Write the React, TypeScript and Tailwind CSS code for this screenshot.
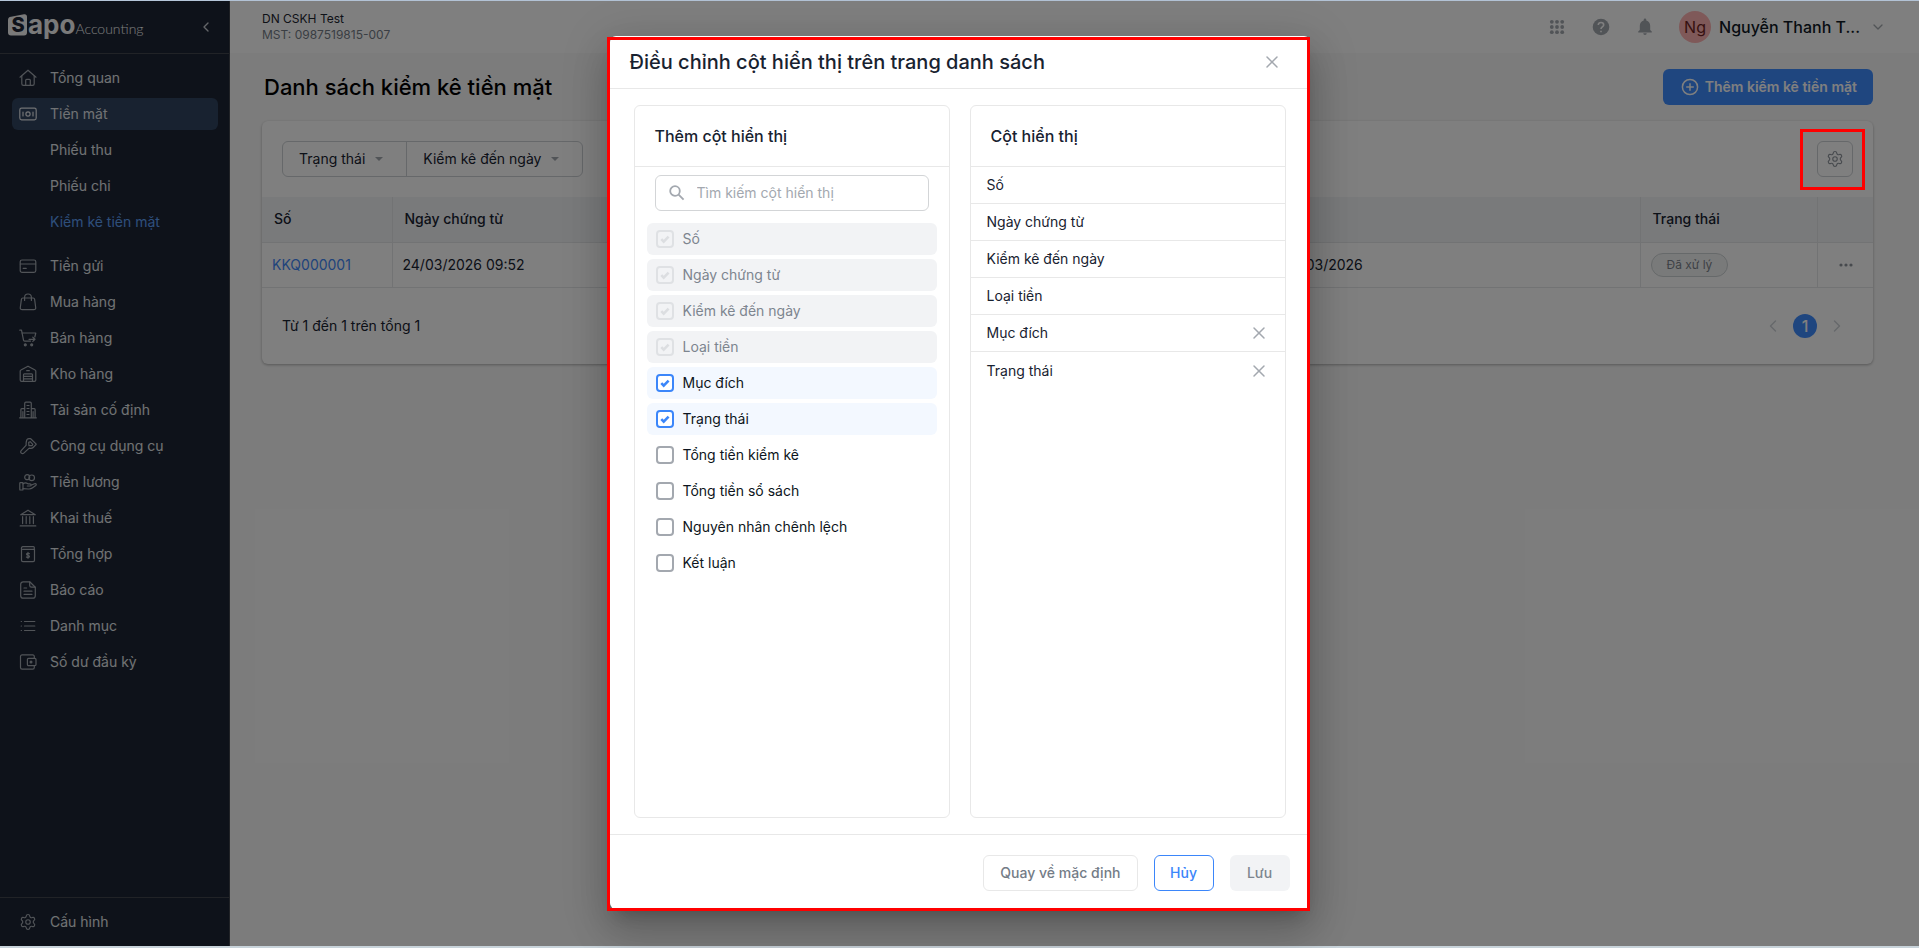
import { useState, type ReactNode } from "react";
import { ChevronDown, ChevronLeft, ChevronRight, Settings, X } from "lucide-react";

function NavIcon({ children }: { children: ReactNode }) {
  return (
    <svg
      viewBox="0 0 18 18"
      className="size-[18px] shrink-0"
      fill="none"
      stroke="currentColor"
      strokeWidth="1.2"
      strokeLinecap="round"
      strokeLinejoin="round"
      aria-hidden="true"
    >
      {children}
    </svg>
  );
}

const icons: Record<string, ReactNode> = {
  home: (
    <>
      <path d="M1 8.2 9 1.2l8 7" />
      <path d="M2.8 7v7.8c0 1 .6 1.6 1.6 1.6h9.2c1 0 1.6-.6 1.6-1.6V7" />
      <path d="M6.7 16.2v-5c0-.6.3-.9.9-.9h2.8c.6 0 .9.3.9.9v5" />
    </>
  ),
  cash: (
    <>
      <rect x="0.8" y="3.2" width="16.4" height="11.6" rx="1.8" />
      <circle cx="9" cy="9" r="2.1" />
      <path d="M4 7v4M14 7v4" />
    </>
  ),
  card: (
    <>
      <rect x="1.2" y="3" width="15.6" height="12.4" rx="1.8" />
      <path d="M1.4 7h15.2M4.2 11.4h3" />
    </>
  ),
  bag: (
    <>
      <path d="M3.9 5h10.2c.8 0 1.4.5 1.5 1.3l1.1 8.2c.2 1.3-.6 2.2-1.9 2.2H3.2c-1.3 0-2.1-.9-1.9-2.2l1.1-8.2C2.500 5.500 3.100 5 3.900 5Z" />
      <path d="M5.600 7.400V4.400a3.400 3.400 0 0 1 6.800 0v3" />
    </>
  ),
  cart: (
    <>
      <path d="M.8 1.200h1.700l2 10c.1.600.5.900 1.100.9h6" />
      <path d="M3.200 4h13.600l-1 4" />
      <path d="M10 10.300h5.600M13.800 8.200l2.200 2.100-2.200 2.100" />
      <circle cx="6.300" cy="15.800" r="1" fill="currentColor" />
      <circle cx="12.700" cy="15.800" r="1" fill="currentColor" />
    </>
  ),
  warehouse: (
    <>
      <path d="M1.200 15V6.100c0-.5.200-.9.700-1.100L9 1.200 16.100 5c.5.200.7.600.7 1.100V15c0 .9-.5 1.400-1.400 1.400H2.600c-.9 0-1.400-.5-1.400-1.400Z" />
      <path d="M4.500 16.200V9.800c0-.6.300-.9.900-.9h7.200c.6 0 .9.300.9.900v6.400M4.700 11.400h8.600M4.700 13.900h8.600M7.700 5.700h2.600" />
    </>
  ),
  building: (
    <>
      <path d="M.6 16.800h16.800M5.700 16.600V2.400c0-.8.400-1.200 1.200-1.200h4.200c.8 0 1.200.4 1.200 1.200v14.200M1.900 16.600V8.500c0-.6.300-.9.900-.9h2.700M12.500 7.600h2.700c.6 0 .9.300.9.900v8.100" />
      <path d="M8 4.500h2M8 7.500h2M8 10.500h2M8 13.500h2M3.900 10.500v6M14.100 10.500v6" />
    </>
  ),
  tool: (
    <>
      <path d="M7.400 4.500c.1-1.600 1-2.700 2.600-2.800h1.700l5.300 5.200c.2.300.2.600-.1.800l-2.700 2.800c-1.200 1.200-2.700 1-4 .6l-5.400 5c-.7.700-1.700.7-2.500 0s-.8-1.700-.1-2.500l5-5.500c-.2-1.200-.1-2.400.2-3.600Z" />
      <path d="m9.700 5.400.2 3.200 3.200.1.700-1.400-2.600-2.600Z" />
    </>
  ),
  payroll: (
    <>
      <rect x=".8" y="9.600" width="3.200" height="7.400" rx=".6" />
      <path d="M4 10.800c1.700-1.200 3.300-1.200 4.900 0h2c1.700 0 1.700 2.200 0 2.200H8.300M12 12.300l3.500-1.600c1.500-.6 2.400.8 1.200 1.800l-3.400 2.600c-1.300 1-2.400 1-3.900.9L4 15.700" />
      <circle cx="8.200" cy="4.200" r="2.500" />
      <circle cx="12.700" cy="4.800" r="2.800" />
    </>
  ),
  bank: (
    <>
      <path d="M1.700 5.700 9 1.200l7.300 4.500ZM1.200 16.900h15.600" />
      <path d="M3.600 7.600v7M7.200 7.600v7M10.800 7.600v7M14.400 7.600v7" />
    </>
  ),
  ledger: (
    <>
      <path d="M2.600 4.300c-.6-1.300.1-2.700 1.400-2.700h10.400c.6 0 .9.300.9.900v1.800M2.500 3.200v12c0 .9.500 1.400 1.400 1.400h10.200c.9 0 1.400-.5 1.400-1.400V4.300H3.700" />
      <path d="M10.500 8.700c-1-.8-3-.5-3 .6 0 1.400 3 .7 3 2.100 0 1.200-2 1.400-3.100.6M9 7.300v6" />
    </>
  ),
  report: (
    <>
      <path d="M10.700.8H4.200c-1.500 0-2.500 1-2.500 2.500v11.400c0 1.500 1 2.500 2.500 2.500h9.600c1.500 0 2.500-1 2.500-2.500V6.200L10.700.8Z" />
      <path d="M10.700 1v3.500c0 1.200.6 1.700 1.800 1.700h3.500M5 7h2.600M5 10.200h8M5 13.300h8" />
    </>
  ),
  list: <path d="M2.200 4.500h.3M2.200 9h.3M2.200 13.500h.3M5.500 4.500h10.300M5.500 9h10.300M5.500 13.500h10.300" />,
  wallet: (
    <>
      <path d="M15.300 5V3.500c0-1-.6-1.600-1.600-1.600H3.100c-1 0-1.600.6-1.600 1.600v11c0 1 .6 1.600 1.600 1.600h10.600c1 0 1.600-.6 1.600-1.600V13" />
      <rect x="8.400" y="5.300" width="8.600" height="7.400" rx="1.200" />
      <circle cx="12" cy="9" r=".9" fill="currentColor" />
    </>
  ),
};

type NavEntry = { label: string; icon?: string; active?: boolean; current?: boolean };

const cashNav: NavEntry[] = [
  { label: "Tổng quan", icon: "home" },
  { label: "Tiền mặt", icon: "cash", active: true },
  { label: "Phiếu thu" },
  { label: "Phiếu chi" },
  { label: "Kiểm kê tiền mặt", current: true },
];

const mainNav: NavEntry[] = [
  { label: "Tiền gửi", icon: "card" },
  { label: "Mua hàng", icon: "bag" },
  { label: "Bán hàng", icon: "cart" },
  { label: "Kho hàng", icon: "warehouse" },
  { label: "Tài sản cố định", icon: "building" },
  { label: "Công cụ dụng cụ", icon: "tool" },
  { label: "Tiền lương", icon: "payroll" },
  { label: "Khai thuế", icon: "bank" },
  { label: "Tổng hợp", icon: "ledger" },
  { label: "Báo cáo", icon: "report" },
  { label: "Danh mục", icon: "list" },
  { label: "Số dư đầu kỳ", icon: "wallet" },
];

function NavList({ items }: { items: NavEntry[] }) {
  return (
    <ul className="flex flex-col gap-1">
      {items.map((item) => (
        <li key={item.label}>
          <a
            href="#"
            className={`flex h-8 items-center gap-[13px] rounded-md pl-[7px] ${
              item.active ? "bg-[#304460]" : ""
            } ${item.current ? "text-[#5c9ff5]" : "text-[#e1e4e8]"}`}
          >
            <span className={`w-[18px] ${item.active ? "text-[#e1e4e8]" : "text-[#a2a8b0]"}`}>
              {item.icon && <NavIcon>{icons[item.icon]}</NavIcon>}
            </span>
            {item.label}
          </a>
        </li>
      ))}
    </ul>
  );
}

function Sidebar() {
  return (
    <aside className="flex w-[230px] shrink-0 flex-col border-r border-[#42464f] bg-[#1c2434]">
      <div className="flex h-[53px] items-center justify-between border-b border-[#42464f] pr-[15px] pl-2">
        <div className="flex items-center pb-1 text-[#f4f4f4]" aria-label="Sapo Accounting">
          <span className="relative flex h-[22px] w-5 items-center justify-center">
            <svg viewBox="0 0 20 22" className="absolute inset-0 size-full" aria-hidden="true">
              <path
                d="M3 2.800 16 .3c1.800-.3 3 .6 3 2.400v15.700c0 2-1 3-3 3H3c-2 0-3-1-3-3V6c0-2 1-2.900 3-3.200Z"
                fill="currentColor"
              />
            </svg>
            <b className="relative text-xl leading-5 font-extrabold text-[#1c2434]">S</b>
          </span>
          <b className="text-[26px] leading-6 font-bold">apo</b>
          <span className="mt-2 font-[Lato] text-[14px] leading-4 font-light">Accounting</span>
        </div>
        <button type="button" aria-label="Thu gọn menu" className="text-[#c9ccd2]">
          <ChevronLeft className="size-4" strokeWidth={2} />
        </button>
      </div>
      <nav className="flex flex-1 flex-col gap-3 px-[11px] pt-2 pl-3">
        <NavList items={cashNav} />
        <NavList items={mainNav} />
      </nav>
      <a
        href="#"
        className="flex h-[49px] items-center gap-[13px] border-t border-[#42464f] pl-[19px] text-[#e1e4e8]"
      >
        <Settings className="size-[18px] text-[#a2a8b0]" strokeWidth={1.5} />
        Cấu hình
      </a>
    </aside>
  );
}

function TopBar() {
  return (
    <header className="flex h-[52px] shrink-0 items-center justify-between bg-white pr-[33px] pl-8 shadow-[0_1px_2px_rgba(0,0,0,0.25)]">
      <div className="text-xs">
        <p className="text-[#1c2430]">DN CSKH Test</p>
        <p className="text-[#747c87]">MST: 0987519815-007</p>
      </div>
      <div className="flex items-center">
        <button type="button" aria-label="Ứng dụng" className="mr-[26px] text-[#a3a8af]">
          <svg viewBox="0 0 16 16" className="size-4" fill="currentColor" aria-hidden="true">
            {[2.800, 8, 13.200].map((y) =>
              [2.800, 8, 13.200].map((x) => <circle key={`${x}-${y}`} cx={x} cy={y} r="1.900" />),
            )}
          </svg>
        </button>
        <button type="button" aria-label="Trợ giúp" className="mr-6 text-[#a3a8af]">
          <svg viewBox="0 0 20 20" className="size-5" aria-hidden="true">
            <circle cx="10" cy="10" r="8.300" fill="currentColor" />
            <path
              d="M7.300 8c0-1.600 1.200-2.500 2.700-2.500s2.700.9 2.700 2.400c0 1.900-2.700 2.100-2.700 4M10 13.700v1.600"
              fill="none"
              stroke="#fff"
              strokeWidth="1.600"
            />
          </svg>
        </button>
        <button type="button" aria-label="Thông báo" className="mr-6 text-[#a3a8af]">
          <svg viewBox="0 0 20 20" className="size-5" fill="currentColor" aria-hidden="true">
            <path d="M10 18a1.800 1.800 0 0 0 1.800-1.700H8.200A1.800 1.800 0 0 0 10 18Zm5.200-5V8.700c0-2.600-1.400-4.700-3.900-5.300v-.6a1.300 1.300 0 0 0-2.600 0v.6C6.200 4 4.800 6.100 4.800 8.700V13l-1.600 1.600v.9h13.600v-.9L15.200 13Z" />
          </svg>
        </button>
        <button type="button" className="flex items-center gap-2 text-base font-medium text-[#0f1824]">
          <span className="flex size-8 items-center justify-center rounded-full bg-[#ffb3b3] font-normal text-[#6d1f1f]">
            Ng
          </span>
          <span className="text-left">Nguyễn Thanh T...</span>
          <ChevronDown className="ml-0.5 size-4 text-[#a3a8af]" strokeWidth={2} />
        </button>
      </div>
    </header>
  );
}

function FilterButton({ children }: { children: ReactNode }) {
  return (
    <button type="button" className="flex items-center gap-0.5 pr-[15px] pl-4">
      {children}
      <svg viewBox="0 0 24 24" className="size-6 text-[#a3a8af]" aria-hidden="true">
        <path d="M8 10h8l-4 4Z" fill="currentColor" />
      </svg>
    </button>
  );
}

const columns = ["Số", "Ngày chứng từ", "Kiểm kê đến ngày", "Loại tiền", "Mục đích", "Trạng thái"];

function CashCountTable() {
  return (
    <table className="w-full table-fixed border-collapse text-left">
      <colgroup>
        <col className="w-[130px]" />
        <col className="w-[250px]" />
        <col className="w-[250px]" />
        <col className="w-[233px]" />
        <col />
        <col className="w-[177px]" />
        <col className="w-[56px]" />
      </colgroup>
      <thead className="bg-[#f2f4f7]">
        <tr className="h-[45px] border-b border-[#e4e6e9]">
          {columns.map((name) => (
            <th key={name} scope="col" className="border-r border-[#e4e6e9] pl-3 font-medium">
              {name}
            </th>
          ))}
          <th scope="col" aria-label="Thao tác" />
        </tr>
      </thead>
      <tbody>
        <tr className="h-[45px] border-b border-[#e4e6e9] [&>td]:border-r [&>td]:border-[#e4e6e9] [&>td]:pl-2.5 [&>td:last-child]:border-r-0">
          <td>
            <a href="#" className="text-[#4187f7]">
              KKQ000001
            </a>
          </td>
          <td>24/03/2026 09:52</td>
          <td>31/03/2026</td>
          <td>VND</td>
          <td>Kiểm kê quỹ đến ngày 31/03/2026</td>
          <td>
            <span className="inline-flex h-6 items-center rounded-full border border-[#cdd2d4] bg-[#f3f5f5] px-[15px] align-middle text-xs text-[#7c838c]">
              Đã xử lý
            </span>
          </td>
          <td>
            <button type="button" aria-label="Thao tác khác" className="ml-2.5 flex text-[#8f959d]">
              <svg viewBox="0 0 16 16" className="size-4" fill="currentColor" aria-hidden="true">
                <circle cx="3" cy="8" r="1.600" />
                <circle cx="8" cy="8" r="1.600" />
                <circle cx="13" cy="8" r="1.600" />
              </svg>
            </button>
          </td>
        </tr>
      </tbody>
    </table>
  );
}

function ListPage() {
  return (
    <main className="flex flex-1 flex-col gap-4 bg-[#f9f9f9] pt-4 pr-[46px] pl-8">
      <div className="flex items-center justify-between">
        <h1 className="pl-0.5 text-[22px] leading-8 font-medium text-black">Danh sách kiểm kê tiền mặt</h1>
        <button
          type="button"
          className="flex h-9 items-center gap-1.5 rounded-md bg-[#3f8cff] pr-4 pl-[18px] font-semibold text-white"
        >
          <svg viewBox="0 0 18 18" className="size-[18px]" fill="none" stroke="currentColor" strokeWidth="1.500" aria-hidden="true">
            <circle cx="9" cy="9" r="7.600" />
            <path d="M9 5.200v7.600M5.200 9h7.600" />
          </svg>
          Thêm kiểm kê tiền mặt
        </button>
      </div>
      <section className="rounded-md bg-white text-[#182230] shadow-[0_1px_3px_rgba(0,0,0,0.3)]">
        <div className="flex items-center justify-between p-5">
          <div className="flex h-9 divide-x divide-[#ccd0d4] rounded-md border border-[#ccd0d4]">
            <FilterButton>Trạng thái</FilterButton>
            <FilterButton>Kiểm kê đến ngày</FilterButton>
          </div>
          <div className="relative">
            <button
              type="button"
              aria-label="Điều chỉnh cột"
              className="flex size-9 items-center justify-center rounded-md border border-[#ccd0d4] text-[#8f959d]"
            >
              <Settings className="size-[18px]" strokeWidth={1.500} />
            </button>
            <span className="pointer-events-none absolute -top-3 -right-3 -bottom-[13px] -left-[17px] z-20 border-3 border-[#ff0000]" />
          </div>
        </div>
        <CashCountTable />
        <div className="flex h-[76px] items-center justify-between px-5">
          <p>Từ 1 đến 1 trên tổng 1</p>
          <div className="flex items-center text-[#ced2d7]">
            <button type="button" aria-label="Trang trước">
              <ChevronLeft className="size-5" strokeWidth={1.800} />
            </button>
            <button
              type="button"
              className="mx-2.5 flex size-6 items-center justify-center rounded-full bg-[#3f8cff] text-base font-medium text-white"
            >
              1
            </button>
            <button type="button" aria-label="Trang sau" className="mr-1.5">
              <ChevronRight className="size-5" strokeWidth={1.800} />
            </button>
          </div>
        </div>
      </section>
    </main>
  );
}

const fixedColumns = ["Số", "Ngày chứng từ", "Kiểm kê đến ngày", "Loại tiền"];
const defaultColumns = ["Mục đích", "Trạng thái"];
const optionalColumns = [
  ...defaultColumns,
  "Tổng tiền kiểm kê",
  "Tổng tiền sổ sách",
  "Nguyên nhân chênh lệch",
  "Kết luận",
];

function ColumnOption(props: { label: string; checked: boolean; disabled?: boolean; onToggle?: () => void }) {
  const { label, checked, disabled, onToggle } = props;
  return (
    <label
      className={`flex h-8 items-center gap-[9px] rounded-md px-[9px] ${
        disabled ? "bg-[#f2f3f5] text-[#7d858f]" : checked ? "bg-[#f3f8ff] text-[#0d1520]" : "text-[#0d1520]"
      }`}
    >
      <span className="relative flex size-[18px]">
        <input
          type="checkbox"
          checked={checked}
          disabled={disabled}
          onChange={onToggle}
          className="size-[18px] appearance-none rounded-[4px] border-2 border-[#a3a8af] bg-white checked:border-[#3b86fa] disabled:border-[#dfe1e4] disabled:bg-transparent"
        />
        {checked && (
          <svg
            viewBox="0 0 18 18"
            className={`pointer-events-none absolute inset-0 size-[18px] ${disabled ? "text-[#dcdee1]" : "text-[#3b86fa]"}`}
            aria-hidden="true"
          >
            <path d="m5.300 9.200 2.400 2.400 4.900-4.900" fill="none" stroke="currentColor" strokeWidth="2.600" />
          </svg>
        )}
      </span>
      {label}
    </label>
  );
}

function ColumnDialog() {
  const [shown, setShown] = useState<string[]>(defaultColumns);
  const toggle = (name: string) =>
    setShown((list) => (list.includes(name) ? list.filter((c) => c !== name) : [...list, name]));

  return (
    <div
      role="dialog"
      aria-modal="true"
      aria-labelledby="column-dialog-title"
      className="relative flex w-[700px] flex-col rounded-md bg-white text-[#182230] shadow-[0_11px_15px_-7px_rgba(0,0,0,0.2),0_24px_38px_3px_rgba(0,0,0,0.14),0_9px_46px_8px_rgba(0,0,0,0.12)]"
    >
      <div className="flex h-[53px] items-center justify-between border-b border-[#e8e8e8] pr-7 pl-5">
        <h2 id="column-dialog-title" className="text-xl font-medium">
          Điều chỉnh cột hiển thị trên trang danh sách
        </h2>
        <button type="button" aria-label="Đóng" className="text-[#a3a8af]">
          <X className="size-5" strokeWidth={1.800} />
        </button>
      </div>
      <div className="grid flex-1 grid-cols-2 gap-5 px-6 py-4">
        <section className="rounded-md border border-[#e8e8e8]">
          <h3 className="flex h-[61px] items-center border-b border-[#e8e8e8] px-5 text-base font-medium">
            Thêm cột hiển thị
          </h3>
          <div className="mx-5 mt-2 flex h-9 items-center gap-[11px] rounded-md border border-[#d3d5d7] pl-3">
            <svg viewBox="0 0 18 18" className="size-[18px] text-[#a3a8af]" fill="none" stroke="currentColor" strokeWidth="1.800" aria-hidden="true">
              <circle cx="7" cy="7" r="4.800" />
              <path d="m10.600 10.600 5 5" />
            </svg>
            <input
              type="text"
              aria-label="Tìm kiếm cột hiển thị"
              placeholder="Tìm kiếm cột hiển thị"
              className="min-w-0 flex-1 outline-none placeholder:text-[#a3a8af]"
            />
          </div>
          <div className="mx-3 mt-3 flex flex-col gap-1">
            {fixedColumns.map((name) => (
              <ColumnOption key={name} label={name} checked disabled />
            ))}
            {optionalColumns.map((name) => (
              <ColumnOption key={name} label={name} checked={shown.includes(name)} onToggle={() => toggle(name)} />
            ))}
          </div>
        </section>
        <section className="rounded-md border border-[#e8e8e8]">
          <h3 className="flex h-[61px] items-center border-b border-[#e8e8e8] px-5 text-base font-medium">
            Cột hiển thị
          </h3>
          <ul className="divide-y divide-[#e8e8e8]">
            {[...fixedColumns, ...shown].map((name) => (
              <li key={name} className="flex h-[37px] items-center justify-between px-4">
                {name}
                {shown.includes(name) && (
                  <button type="button" aria-label={`Bỏ cột ${name}`} className="text-[#a3a8af]" onClick={() => toggle(name)}>
                    <X className="size-5" strokeWidth={1.800} />
                  </button>
                )}
              </li>
            ))}
          </ul>
        </section>
      </div>
      <div className="flex h-[75px] items-start justify-end gap-4 border-t border-[#e8e8e8] px-5 pt-5">
        <button
          type="button"
          onClick={() => setShown(defaultColumns)}
          className="h-9 rounded-md border border-[#e8e8e8] px-4 font-medium text-[#747c87]"
        >
          Quay về mặc định
        </button>
        <button type="button" className="h-9 w-[60px] rounded-md border border-[#3b86fa] font-medium text-[#3b86fa]">
          Hủy
        </button>
        <button type="button" disabled className="h-9 w-[60px] rounded-md bg-[#f2f3f5] font-medium text-[#7d858f]">
          Lưu
        </button>
      </div>
      <span className="pointer-events-none absolute top-px right-0 -bottom-0.5 -left-[3px] border-3 border-[#ff0000]" />
    </div>
  );
}

export default function App() {
  return (
    <div className="relative flex min-h-screen flex-col border-t border-b-2 border-t-[#b5c6d9] border-b-[#c8d3da] font-[Inter,sans-serif] text-sm">
      <div className="flex flex-1">
        <Sidebar />
        <div className="flex min-w-0 flex-1 flex-col">
          <TopBar />
          <ListPage />
        </div>
      </div>
      <div className="absolute inset-0 z-10 flex justify-center bg-black/50 pt-[35px] pb-[37px]">
        <ColumnDialog />
      </div>
    </div>
  );
}
